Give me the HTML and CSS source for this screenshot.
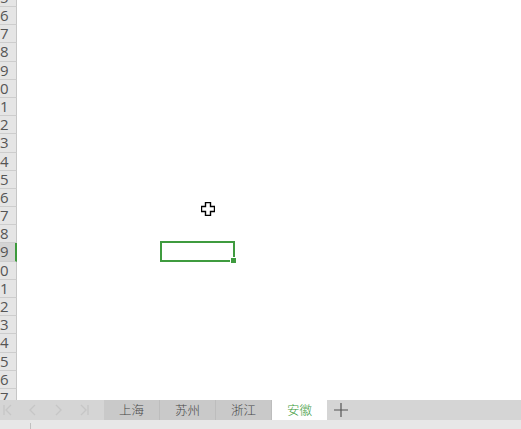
FILE: index.html
```html
<!DOCTYPE html>
<html>
<head>
<meta charset="utf-8">
<link rel="stylesheet" href="styles.css">
</head>
<body>
<div class="app">
  <div class="sheet">
    <div class="rows">
      <div class="row"><div class="rh">5</div></div>
      <div class="row"><div class="rh">6</div></div>
      <div class="row"><div class="rh">7</div></div>
      <div class="row"><div class="rh">8</div></div>
      <div class="row"><div class="rh">9</div></div>
      <div class="row"><div class="rh">0</div></div>
      <div class="row"><div class="rh">1</div></div>
      <div class="row"><div class="rh">2</div></div>
      <div class="row"><div class="rh">3</div></div>
      <div class="row"><div class="rh">4</div></div>
      <div class="row"><div class="rh">5</div></div>
      <div class="row"><div class="rh">6</div></div>
      <div class="row"><div class="rh">7</div></div>
      <div class="row"><div class="rh">8</div></div>
      <div class="row"><div class="rh active">9</div></div>
      <div class="row"><div class="rh">0</div></div>
      <div class="row"><div class="rh">1</div></div>
      <div class="row"><div class="rh">2</div></div>
      <div class="row"><div class="rh">3</div></div>
      <div class="row"><div class="rh">4</div></div>
      <div class="row"><div class="rh">5</div></div>
      <div class="row"><div class="rh">6</div></div>
      <div class="row"><div class="rh">7</div></div>
    </div>
    <div class="selection"><span class="handle"></span></div>
    <svg class="cursor" width="14" height="14" viewBox="0 0 14 14">
      <path d="M4.5 0.5h5v4h4v5h-4v4h-5v-4h-4v-5h4z" fill="#fff" stroke="#000" stroke-width="1.4"/>
    </svg>
  </div>
  <div class="tabbar">
    <div class="nav">
      <svg width="100" height="20" viewBox="0 0 100 20">
        <g fill="none" stroke="#c6c6c6" stroke-width="1.3">
          <path d="M4 5v10M11 5l-5 5 5 5"/>
          <path d="M35 5l-5 5 5 5"/>
          <path d="M56 5l5 5-5 5"/>
          <path d="M81 5l5 5-5 5M88 5v10"/>
        </g>
      </svg>
    </div>
    <div class="tab">上海</div>
    <div class="tab">苏州</div>
    <div class="tab">浙江</div>
    <div class="tab current">安徽</div>
    <div class="add">
      <svg width="14" height="14" viewBox="0 0 14 14"><path d="M7 0v14M0 7h14" stroke="#555" stroke-width="1.2"/></svg>
    </div>
  </div>
  <div class="status"><span class="sep"></span></div>
</div>
</body>
</html>
```

FILE: styles.css
```css
html, body {
  margin: 0;
  padding: 0;
  background: #fff;
}
.app {
  width: 521px;
  height: 429px;
  display: flex;
  flex-direction: column;
  overflow: hidden;
  font-family: "Noto Sans CJK SC", "Open Sans", sans-serif;
}
.sheet {
  position: relative;
  height: 400px;
  overflow: hidden;
  flex: none;
}
.rows {
  margin-top: -11.2px;
  display: flex;
  flex-direction: column;
}
.row {
  height: 18.19px;
  display: flex;
}
.rh {
  width: 17px;
  box-sizing: border-box;
  background: #e5e5e5;
  border-right: 1px solid #c6c6c6;
  border-bottom: 1px solid #cdcdcd;
  color: #555;
  font-family: "Open Sans", "Noto Sans", sans-serif;
  font-size: 15px;
  line-height: 17px;
}
.rh.active {
  background: #d4d4d4;
  border-right: 2px solid #3c9a3c;
}
.selection {
  position: absolute;
  left: 160px;
  top: 241px;
  width: 75px;
  height: 21px;
  box-sizing: border-box;
  border: 2px solid #3f9b3f;
}
.handle {
  position: absolute;
  right: -4px;
  bottom: -4px;
  width: 5px;
  height: 5px;
  background: #3f9b3f;
  border: 1px solid #fff;
}
.cursor {
  position: absolute;
  left: 201px;
  top: 202px;
}
.tabbar {
  height: 20px;
  flex: none;
  background: #d5d5d5;
  display: flex;
  align-items: stretch;
}
.nav {
  width: 104px;
  flex: none;
  display: flex;
  align-items: center;
}
.nav svg {
  display: block;
}
.tab {
  width: 55px;
  flex: none;
  background: #c9c9c9;
  border-right: 1px solid #bdbdbd;
  text-align: center;
  font-size: 12.5px;
  font-weight: 300;
  line-height: 20px;
  color: #474747;
}
.tab.current {
  background: #fff;
  color: #3a9a3a;
  border-right: none;
}
.add {
  width: 28px;
  display: flex;
  align-items: center;
  justify-content: center;
}
.add svg {
  display: block;
}
.status {
  flex: 1;
  background: #e7e7e7;
  position: relative;
}
.sep {
  position: absolute;
  left: 30px;
  top: 3px;
  width: 1px;
  height: 6px;
  background: #c0c0c0;
}
```
